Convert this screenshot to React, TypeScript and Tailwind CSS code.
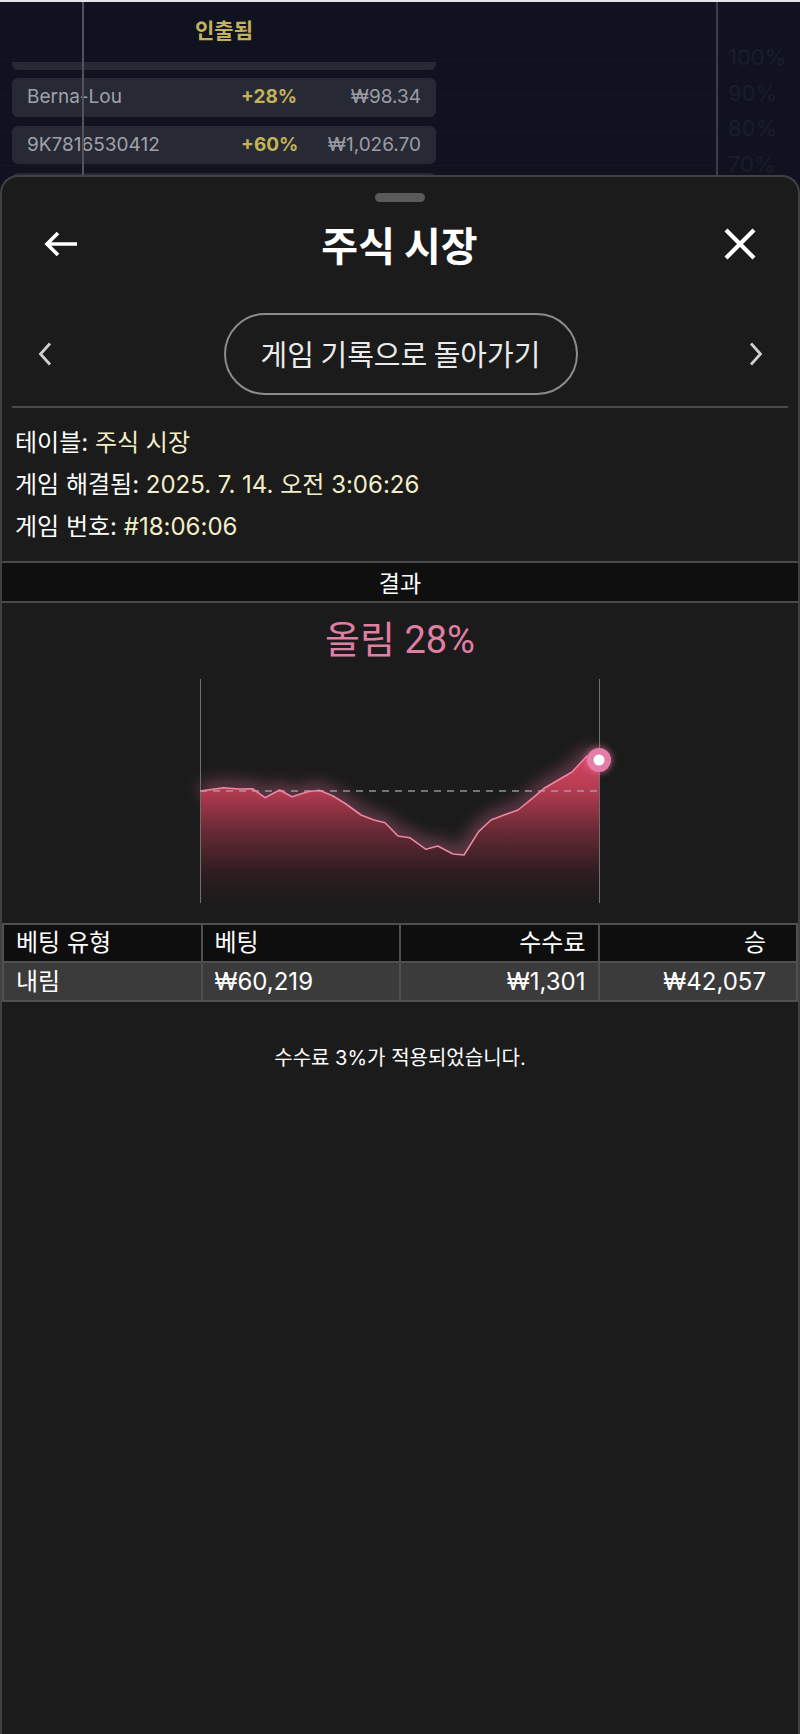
import React from "react";

const pts: [number, number][] = [
  [0.5, 112], [23.5, 108.7], [39, 110], [52.6, 109.7], [65, 118.7], [79.6, 111], [92, 117.7],
  [107.7, 112.7], [119.4, 111.3], [133, 117], [146, 125], [161, 136], [174, 141], [185, 143.7],
  [198, 157], [209.7, 158.7], [226, 170.3], [237.8, 167], [253, 175], [264, 176], [278.6, 152.7],
  [291, 141], [304, 136], [318, 131], [332, 119.7], [345, 108.7], [360, 100], [372, 93], [387, 77], [399, 81],
];

function Chart() {
  const line = pts.map((p, i) => `${i === 0 ? "M" : "L"}${p[0]} ${p[1]}`).join(" ");
  const area = `${line} L399 224 L0.5 224 Z`;
  return (
    <svg width="400" height="224" viewBox="0 0 400 224" className="overflow-visible">
      <defs>
        <linearGradient id="fillg" gradientUnits="userSpaceOnUse" x1="0" y1="77" x2="0" y2="224">
          <stop offset="0" stopColor="#d7465f" />
          <stop offset="0.25" stopColor="#b03a50" />
          <stop offset="0.5" stopColor="#6a2a36" />
          <stop offset="0.8" stopColor="#2c1d20" />
          <stop offset="1" stopColor="#1c1b1b" />
        </linearGradient>
        <filter id="glow" x="-20%" y="-30%" width="140%" height="160%">
          <feGaussianBlur stdDeviation="8" />
        </filter>
        <filter id="glow2" x="-50%" y="-50%" width="200%" height="200%">
          <feGaussianBlur stdDeviation="3" />
        </filter>
      </defs>
      <path d={line} fill="none" stroke="#e8739a" strokeWidth="14" opacity="0.4" filter="url(#glow)" />
      <path d={area} fill="url(#fillg)" />
      <line x1="0.5" y1="0" x2="0.5" y2="224" stroke="#6f6f6f" strokeWidth="1" />
      <line x1="399.5" y1="0" x2="399.5" y2="224" stroke="#6f6f6f" strokeWidth="1" />
      <line x1="0" y1="112" x2="399" y2="112" stroke="#a8a8a8" strokeWidth="1.5" strokeDasharray="7 6" opacity="0.85" />
      <path d={line} fill="none" stroke="#ea86a6" strokeWidth="1.6" strokeLinejoin="round" />
      <circle cx="399" cy="81" r="13" fill="#e97aa6" opacity="0.6" filter="url(#glow2)" />
      <circle cx="399" cy="81" r="12" fill="#e47ea8" />
      <circle cx="399" cy="81" r="5.5" fill="#ffffff" />
    </svg>
  );
}

function Card({ name, pct, amt, h }: { name: string; pct: string; amt: string; h: string }) {
  return (
    <div className={`flex ${h} items-center rounded-[6px] bg-[#272a35] pl-[15px] pr-[15px] text-[19px]`}>
      <span className="w-[214px] text-[#9fa2ab]">{name}</span>
      <span className="w-[60px] font-bold text-[#c4b25a]">{pct}</span>
      <span className="flex-1 text-right text-[#9a9da6]">{amt}</span>
    </div>
  );
}

export default function App() {
  return (
    <div className="relative h-[1734px] w-[800px] overflow-hidden bg-[#10131f] font-['Inter','Noto_Sans_CJK_KR',sans-serif]">
      <div className="h-[2px] bg-[#e4e5ea]" />
      <div className="flex h-[1732px]">
        <div className="relative w-[716px]">
          <div className="absolute left-0 right-0 top-[57px] h-[1px] bg-[#141725]" />
          <div className="absolute left-0 right-0 top-[92px] h-[1px] bg-[#141725]" />
          <div className="absolute left-0 right-0 top-[130px] h-[1px] bg-[#141725]" />
          <div className="absolute left-0 right-0 top-[163px] h-[1px] bg-[#141725]" />
          <div className="relative w-[448px] px-[12px]">
            <div className="flex h-[60px] items-center justify-center pb-[4px] font-['Noto_Sans_CJK_KR',sans-serif] text-[21px] font-bold text-[#c3b25c]">
              인출됨
            </div>
            <div className="h-[8px] rounded-b-[6px] bg-[#272a35]" />
            <div className="mt-[8px]">
              <Card name="Berna-Lou" pct="+28%" amt="₩98.34" h="h-[39px]" />
            </div>
            <div className="mt-[9px]">
              <Card name="9K7816530412" pct="+60%" amt="₩1,026.70" h="h-[38px]" />
            </div>
            <div className="mt-[9px]">
              <Card name="" pct="" amt="" h="h-[39px]" />
            </div>
          </div>
        </div>
        <div className="w-[2px] bg-[#3a3e4a]" />
        <div className="flex flex-col pl-[10px] pt-[38px] text-[22px] leading-[35.5px] text-[#1a1d2c]">
          <span>100%</span>
          <span>90%</span>
          <span>80%</span>
          <span>70%</span>
        </div>
      </div>
      <div className="absolute left-[82px] top-[2px] h-[175px] w-[2px] bg-[#50535e]" />

      {/* Sheet */}
      <div className="absolute bottom-0 left-0 right-0 top-[175px] flex flex-col rounded-t-[18px] border-2 border-b-0 border-[#414141] bg-[#1b1b1b] font-['Inter','Noto_Sans_CJK_KR',sans-serif] text-white">
        <div className="mx-auto mt-[16px] h-[9px] w-[50px] rounded-full bg-[#5a5a5a]" />
        <div className="mt-[14px] grid h-[56px] grid-cols-[1fr_auto_1fr] items-center pl-[41px] pr-[42px]">
          <svg width="34" height="26" viewBox="0 0 34 26" className="justify-self-start">
            <path d="M34 13H4M15 2L4 13l11 11" fill="none" stroke="#fff" strokeWidth="3.6" />
          </svg>
          <div className="font-['Noto_Sans_CJK_KR',sans-serif] text-[40px] font-bold leading-[56px]">주식 시장</div>
          <svg width="32" height="32" viewBox="0 0 32 32" className="justify-self-end">
            <path d="M2 2L30 30M30 2L2 30" fill="none" stroke="#fff" strokeWidth="4.2" />
          </svg>
        </div>
        <div className="mt-[41px] grid grid-cols-[1fr_auto_1fr] items-center pl-[36px] pr-[35px]">
          <svg width="14" height="24" viewBox="0 0 14 24" className="justify-self-start">
            <path d="M12 1.5L2.5 12L12 22.5" fill="none" stroke="#d0d0d0" strokeWidth="2.8" />
          </svg>
          <div className="flex h-[82px] w-[354px] items-center justify-center rounded-full border-2 border-[#8c8c8c] font-['Noto_Sans_CJK_KR',sans-serif] text-[29px] text-[#ebebeb]">
            게임 기록으로 돌아가기
          </div>
          <svg width="14" height="24" viewBox="0 0 14 24" className="justify-self-end">
            <path d="M2 1.5L11.5 12L2 22.5" fill="none" stroke="#d0d0d0" strokeWidth="2.8" />
          </svg>
        </div>
        <div className="mx-[10px] mt-[11px] h-[2px] bg-[#4a4a4a]" />
        <div className="pl-[13px] pt-[14px] text-[24px] leading-[42px]">
          <div>
            테이블: <span className="text-[#f2eec8]">주식 시장</span>
          </div>
          <div>
            게임 해결됨: <span className="text-[#f2eec8]">2025. 7. 14. 오전 3:06:26</span>
          </div>
          <div>
            게임 번호: <span className="text-[#f2eec8]">#18:06:06</span>
          </div>
        </div>
        <div className="mt-[13px] flex h-[42px] items-center justify-center border-y-2 border-[#4a4a4a] bg-[#0f0f0f] font-['Noto_Sans_CJK_KR',sans-serif] text-[23px]">
          결과
        </div>
        <div className="mt-[15px] h-[44px] text-center font-['Roboto','Noto_Sans_CJK_KR',sans-serif] text-[38px] leading-[44px] text-[#e07ea3]">올림 28%</div>
        <div className="mt-[17px] flex justify-center">
          <Chart />
        </div>
        <table className="mt-[20px] w-full table-fixed border-collapse text-[24px]">
          <thead>
            <tr className="bg-[#0e0e0e]">
              <th className="h-[38px] border-2 border-[#4f4f4f] px-[12px] text-left font-normal leading-none">베팅 유형</th>
              <th className="h-[38px] border-2 border-[#4f4f4f] px-[12px] text-left font-normal leading-none">베팅</th>
              <th className="h-[38px] border-2 border-[#4f4f4f] px-[12px] text-right font-normal leading-none">수수료</th>
              <th className="h-[38px] border-2 border-[#4f4f4f] pl-[12px] pr-[30px] text-right font-normal leading-none">승</th>
            </tr>
          </thead>
          <tbody>
            <tr className="bg-[#3b3b3b]">
              <td className="h-[39px] border-2 border-[#4f4f4f] px-[12px] text-left leading-none">내림</td>
              <td className="h-[39px] border-2 border-[#4f4f4f] px-[12px] text-left leading-none">₩60,219</td>
              <td className="h-[39px] border-2 border-[#4f4f4f] px-[12px] text-right leading-none">₩1,301</td>
              <td className="h-[39px] border-2 border-[#4f4f4f] pl-[12px] pr-[30px] text-right leading-none">₩42,057</td>
            </tr>
          </tbody>
        </table>
        <div className="mt-[43px] text-center text-[20px] leading-[26px]">수수료 3%가 적용되었습니다.</div>
      </div>
    </div>
  );
}
